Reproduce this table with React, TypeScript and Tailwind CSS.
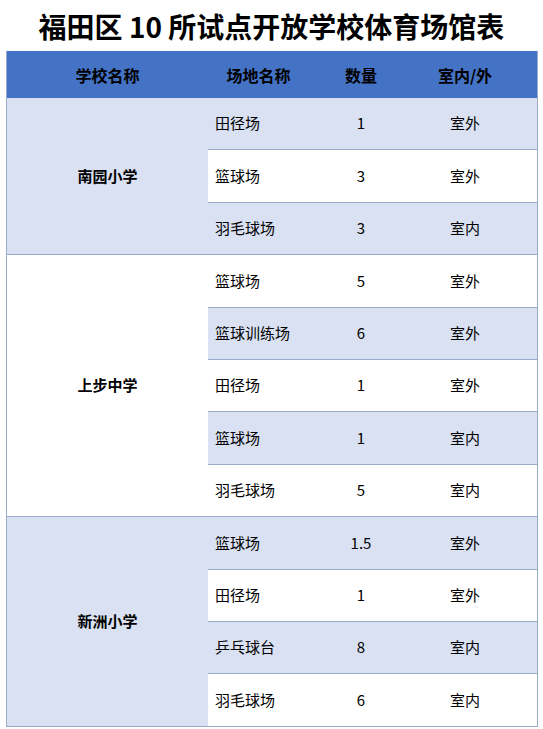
const groups = [
  {
    school: "南园小学",
    rows: [
      ["田径场", "1", "室外"],
      ["篮球场", "3", "室外"],
      ["羽毛球场", "3", "室内"],
    ],
  },
  {
    school: "上步中学",
    rows: [
      ["篮球场", "5", "室外"],
      ["篮球训练场", "6", "室外"],
      ["田径场", "1", "室外"],
      ["篮球场", "1", "室内"],
      ["羽毛球场", "5", "室内"],
    ],
  },
  {
    school: "新洲小学",
    rows: [
      ["篮球场", "1.5", "室外"],
      ["田径场", "1", "室外"],
      ["乒乓球台", "8", "室内"],
      ["羽毛球场", "6", "室内"],
    ],
  },
]

const font = { fontFamily: '"Microsoft YaHei", "Noto Sans CJK SC", "Noto Sans", sans-serif' }

export default function App() {
  let rowIndex = 0

  return (
    <div className="w-[543px] h-[729px] bg-white text-black" style={font}>
      {/* Title */}
      <h1 className="h-[51px] flex items-center justify-center text-[28px] font-bold leading-none">
        福田区 10 所试点开放学校体育场馆表
      </h1>

      <div className="ml-[6px] w-[532px] border-x border-[#9aabc8]">
        {/* Header */}
        <div className="h-[47px] bg-[#4472c4] flex items-center text-[16px] font-bold">
          <div className="w-[201px] text-center">学校名称</div>
          <div className="w-[101px] text-center">场地名称</div>
          <div className="w-[104px] text-center">数量</div>
          <div className="w-[104px] text-center">室内/外</div>
        </div>

        {/* Body */}
        {groups.map((g, gi) => (
          <div
            key={g.school}
            className={`flex border-b border-[#9aabc8] ${gi === 1 ? "bg-white" : "bg-[#d9e1f2]"}`}
          >
            <div className="w-[201px] flex items-center justify-center text-[15px] font-bold">
              {g.school}
            </div>
            <div className="flex-1">
              {g.rows.map((r, ri) => {
                const light = rowIndex++ % 2 === 0
                const last = ri === g.rows.length - 1
                return (
                  <div
                    key={ri}
                    className={`flex items-center text-[15px] ${
                      last ? "h-[51.4px]" : "h-[52.4px] border-b border-[#9aabc8]"
                    } ${light ? "bg-[#d9e1f2]" : "bg-white"}`}
                  >
                    <div className="w-[101px] pl-[7px]">{r[0]}</div>
                    <div className="w-[104px] text-center">{r[1]}</div>
                    <div className="w-[104px] text-center">{r[2]}</div>
                  </div>
                )
              })}
            </div>
          </div>
        ))}
      </div>
    </div>
  )
}
